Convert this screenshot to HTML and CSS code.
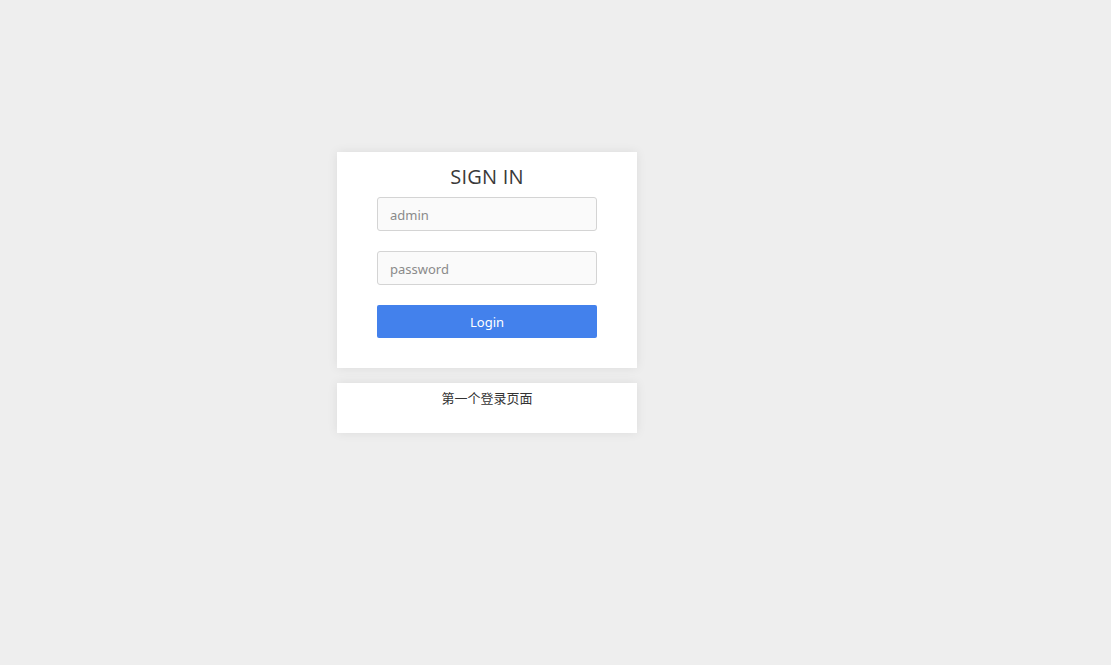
FILE: index.html
```html
<!DOCTYPE html>
<html>
<head>
<meta charset="utf-8">
<link rel="stylesheet" href="styles.css">
</head>
<body>
<div class="wrap">
  <div class="card login">
    <h1 class="title">SIGN IN</h1>
    <input class="field" type="text" placeholder="admin">
    <input class="field" type="password" placeholder="password">
    <button class="btn">Login</button>
  </div>
  <div class="card note">第一个登录页面</div>
</div>
</body>
</html>
```
FILE: styles.css
```css
html, body {
  margin: 0;
  padding: 0;
  background: #eeeeee;
  height: 100%;
}
body {
  font-family: "Noto Sans", "Noto Sans CJK SC", sans-serif;
  color: #333;
}
.wrap {
  padding-top: 152px;
  padding-left: 337px;
  display: flex;
  flex-direction: column;
  gap: 15px;
}
.card {
  width: 300px;
  background: #fff;
  box-shadow: 0 0 10px rgba(0,0,0,0.08);
  box-sizing: border-box;
}
.login {
  display: flex;
  flex-direction: column;
  align-items: center;
  padding: 0 40px 30px;
  gap: 20px;
}
.title {
  margin: 0 0 -20px;
  height: 45px;
  line-height: 49px;
  font-size: 20px;
  font-weight: normal;
  color: #3a3a3a;
  letter-spacing: 0.2px;
  font-family: "Open Sans", "Noto Sans", sans-serif;
}
.field {
  width: 220px;
  height: 34px;
  box-sizing: border-box;
  border: 1px solid #d4d4d4;
  border-radius: 3px;
  background: #fafafa;
  padding: 1px 12px 0;
  font-family: "Noto Sans", sans-serif;
  font-size: 13px;
  color: #555;
  outline: none;
}
.field::placeholder {
  color: #8a8a8a;
}
.btn {
  width: 220px;
  height: 33px;
  border: none;
  border-radius: 2px;
  background: #4381ec;
  color: #fff;
  font-family: "Noto Sans", sans-serif;
  font-size: 13px;
  cursor: pointer;
}
.note {
  height: 50px;
  text-align: center;
  font-size: 13px;
  padding-top: 5px;
  color: #333;
  font-family: "Noto Sans CJK SC", sans-serif;
}
```
